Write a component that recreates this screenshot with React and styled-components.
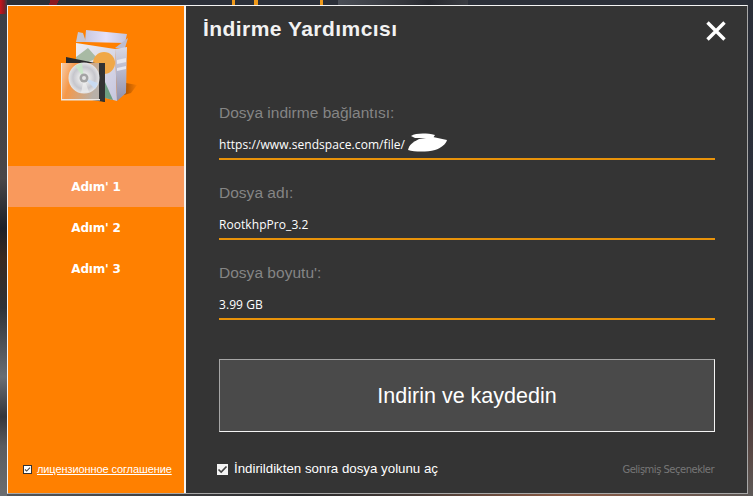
import React from "react";
import styled, { createGlobalStyle } from "styled-components";

const Global = createGlobalStyle`
  html, body { margin: 0; padding: 0; width: 753px; height: 496px; overflow: hidden; background: #2b2f38; }
  #root { width: 753px; height: 496px; }
  * { box-sizing: border-box; }
`;

const Desktop = styled.div`
  width: 753px;
  height: 496px;
  padding: 5px 5px 2px 7px;
  background:
    linear-gradient(90deg, #c8141c 0, #8a1a22 4px, transparent 7px) 0 0 / 7px 14px no-repeat,
    linear-gradient(115deg, transparent 0 30%, #8a1820 30% 38%, transparent 38%) 20px 0 / 100px 5px no-repeat,
    linear-gradient(90deg, transparent 0 4%, #f09a1a 4% 7%, transparent 7% 26%, #f09a1a 26% 30%, transparent 30% 92%, #f09a1a 92% 95%, transparent 95%) 228px 0 / 100px 5px no-repeat,
    linear-gradient(90deg, #4a4e56, #34363c 50%, #26282e 70%, #3a3c42 100%) 338px 0 / 130px 5px no-repeat,
    linear-gradient(180deg, #3a3e46 0, #4a4648 36%, #1c2028 46%, #3a2a20 52%, #2e3238 62%, #6a6e74 76%, #34363c 84%, #5a5c60 90%, #6b6d70 100%) 0 0 / 7px 100% no-repeat,
    linear-gradient(180deg, #2a2e38 0, #2e323c 70%, #4c3c3c 84%, #5a4a46 92%, #5e5a58 100%) right 0 / 5px 100% no-repeat,
    linear-gradient(90deg, #55575a 0, #3a3a3c 25%, #2a2a2c 40%, #453a36 55%, #8a5a44 75%, #74584c 88%, #5a5654 100%) 0 bottom / 100% 2px no-repeat,
    #2b2f38;
`;

const Win = styled.div`
  width: 741px;
  height: 489px;
  display: flex;
  border-top: 1px solid #f4f4f4;
  border-left: 1px solid #f4f4f4;
  border-right: 1px solid #a8a8a8;
  border-bottom: 1px solid #a8a8a8;
  background: #343434;
`;

const Side = styled.aside`
  width: 178px;
  flex: none;
  display: flex;
  flex-direction: column;
  background: #ff8000;
  border-right: 2px solid #f4f4f4;
`;

const Logo = styled.div`
  height: 160px;
  padding: 24px 0 0 53px;
`;

const Steps = styled.nav`
  display: flex;
  flex-direction: column;
`;

const Step = styled.div`
  height: 41px;
  display: flex;
  align-items: center;
  justify-content: center;
  font: bold 12px "DejaVu Sans", sans-serif;
  letter-spacing: -0.2px;
  color: #fff;
  background: ${(p) => (p.$active ? "#f9995c" : "transparent")};
`;

const License = styled.div`
  margin-top: auto;
  display: flex;
  align-items: center;
  gap: 5px;
  height: 16px;
  margin-bottom: 16px;
  padding-left: 15px;
`;

const LicenseBox = styled.span`
  width: 9px;
  height: 9px;
  flex: none;
  display: flex;
  background: #fff;
  border: 1px solid #333;
`;

const LicenseLink = styled.a`
  font: 11px "Liberation Sans", sans-serif;
  letter-spacing: -0.1px;
  color: #fff;
  text-decoration: underline;
  white-space: nowrap;
`;

const Main = styled.main`
  flex: 1;
  min-width: 0;
  display: flex;
  flex-direction: column;
  padding: 0 32px 0 33px;
`;

const Header = styled.header`
  height: 74px;
  margin: 0 -12px 0 -16px;
  padding-top: 11px;
  display: flex;
  align-items: flex-start;
  justify-content: space-between;
`;

const Title = styled.h1`
  margin: 0;
  font: bold 21px/24px "Liberation Sans", sans-serif;
  letter-spacing: 0.45px;
  color: #f2f2f2;
`;

const Close = styled.button`
  width: 22px;
  height: 22px;
  margin-top: 3px;
  padding: 0;
  border: 0;
  background: none;
  display: flex;
`;

const Fields = styled.div`
  display: flex;
  flex-direction: column;
`;

const Field = styled.div`
  height: 80px;
  position: relative;
  display: flex;
  flex-direction: column;
  border-bottom: 2px solid #e8930a;
`;

const Label = styled.label`
  height: 17px;
  margin-top: 24px;
  font: 15.5px/17px "Liberation Sans", sans-serif;
  letter-spacing: 0.02px;
  color: #858585;
`;

const Value = styled.div`
  margin-top: 16px;
  height: 16px;
  font: 12px/16px "Open Sans", sans-serif;
  letter-spacing: 0.06px;
  color: #fff;
`;

const Scribble = styled.svg`
  position: absolute;
  left: 188px;
  top: 53px;
`;

const Primary = styled.button`
  margin-top: 39px;
  height: 73px;
  width: 496px;
  flex: none;
  border-top: 1px solid #a6a6a6;
  border-left: 1px solid #a6a6a6;
  border-right: 1px solid #f4f4f4;
  border-bottom: 1px solid #f4f4f4;
  background: #4a4a4a;
  font: 21.5px "Liberation Sans", sans-serif;
  color: #fff;
  padding: 1px 0 0;
`;

const Footer = styled.footer`
  margin-top: 30px;
  height: 14px;
  display: flex;
  align-items: center;
  justify-content: space-between;
`;

const Check = styled.label`
  margin-left: -2px;
  display: flex;
  align-items: center;
  gap: 6px;
  font: 13.3px/14px "Liberation Sans", sans-serif;
  color: #fff;
`;

const CheckBox = styled.span`
  width: 11px;
  height: 11px;
  flex: none;
  display: flex;
  background: #f4f4f4;
`;

const Advanced = styled.a`
  margin-right: 1px;
  font: 10px "DejaVu Sans", sans-serif;
  letter-spacing: -0.5px;
  color: #777;
`;

const CDBox = () => (
  <svg width="76" height="72" viewBox="0 0 76 72" style={{ display: "block" }}>
    <defs>
      <linearGradient id="bx" x1="0" y1="0" x2="1" y2="1">
        <stop offset="0" stopColor="#eeeef2" />
        <stop offset="1" stopColor="#c6c6de" />
      </linearGradient>
      <linearGradient id="sd" x1="0" y1="0" x2="0" y2="1">
        <stop offset="0" stopColor="#d8d8e6" />
        <stop offset="1" stopColor="#9090aa" />
      </linearGradient>
      <linearGradient id="fl" x1="0" y1="0" x2="1" y2="0">
        <stop offset="0" stopColor="#c8c8e0" />
        <stop offset="0.5" stopColor="#e4e0f8" />
        <stop offset="1" stopColor="#c4c4dc" />
      </linearGradient>
      <linearGradient id="cs" x1="0" y1="0" x2="1" y2="0.3">
        <stop offset="0" stopColor="#f8d0b0" />
        <stop offset="0.35" stopColor="#f59848" />
        <stop offset="1" stopColor="#b8b0a8" />
      </linearGradient>
      <radialGradient id="cd" cx="0.5" cy="0.5" r="0.55">
        <stop offset="0" stopColor="#a8a8a8" />
        <stop offset="0.25" stopColor="#eaeaea" />
        <stop offset="0.65" stopColor="#c6c6cc" />
        <stop offset="1" stopColor="#f0f0f0" />
      </radialGradient>
      <linearGradient id="sh" x1="0" y1="0" x2="1" y2="0">
        <stop offset="0" stopColor="#a85000" />
        <stop offset="1" stopColor="#f87c00" />
      </linearGradient>
    </defs>
    <path d="M65 53l11 2-6 8-7 2z" fill="url(#sh)" />
    <path d="M15 12l2-10 5 1 3 9z" fill="#c6c6d4" />
    <path d="M25 0l41 4-2 9-40-1z" fill="url(#fl)" />
    <path d="M54 18l13-10-3 10z" fill="#bcbcd0" />
    <path d="M15 13l39 6 2 52-41-11z" fill="url(#bx)" />
    <path d="M54 19l12-2-1 46-9 8z" fill="url(#sd)" />
    <path d="M56 30l9-2v4l-9 2zM56 38l9-2v3l-9 2z" fill="#e6e6f0" />
    <path d="M15 27l12-9 9 10-21 10z" fill="#a8baa4" />
    <circle cx="43" cy="33" r="11" fill="#f0a848" />
    <path d="M44 52l8 18-8-2z" fill="#6e9e80" />
    <path d="M5 27l39 8v37l-39-6z" fill="#2a2a2a" />
    <path d="M0 33h39v37H0z" fill="url(#cs)" />
    <path d="M38 33h6v39l-6-2z" fill="#333" />
    <circle cx="23" cy="48" r="15.5" fill="url(#cd)" />
    <path d="M23 48l-9-12 7-3z" fill="#c6eac4" opacity=".8" />
    <path d="M23 48l14 5-3 6z" fill="#c8dcf4" opacity=".9" />
    <path d="M23 48l-3 15 8-1z" fill="#f0f0f0" opacity=".7" />
    <circle cx="23" cy="48" r="4.5" fill="#a4a4a4" />
    <circle cx="23" cy="48" r="2" fill="#e4e4e4" />
    <path d="M0 69h39v1.5H0zM0 33h1v37H0z" fill="#ece8e4" />
  </svg>
);

const Tick = ({ size, color }) => (
  <svg width={size} height={size} viewBox="0 0 11 11">
    <path d="M1.5 5.5L4.2 8 9.5 2.5" fill="none" stroke={color} strokeWidth="1.7" />
  </svg>
);

const CloseIcon = () => (
  <svg width="22" height="22" viewBox="0 0 22 22">
    <path d="M2.5 2.5L19.5 19.5M19.5 2.5L2.5 19.5" stroke="#fff" strokeWidth="3.4" fill="none" />
  </svg>
);

export default function App() {
  return (
    <>
      <Global />
      <Desktop>
        <Win>
          <Side>
            <Logo>
              <CDBox />
            </Logo>
            <Steps>
              <Step $active>Adım' 1</Step>
              <Step>Adım' 2</Step>
              <Step>Adım' 3</Step>
            </Steps>
            <License>
              <LicenseBox>
                <Tick size={7} color="#444" />
              </LicenseBox>
              <LicenseLink>лицензионное соглашение</LicenseLink>
            </License>
          </Side>
          <Main>
            <Header>
              <Title>İndirme Yardımcısı</Title>
              <Close aria-label="close">
                <CloseIcon />
              </Close>
            </Header>
            <Fields>
              <Field>
                <Label>Dosya indirme bağlantısı:</Label>
                <Value>https://www.sendspace.com/file/</Value>
                <Scribble width="41" height="20" viewBox="0 0 41 20">
                  <path d="M4 3C9 0 19 0 28 2L26 5 18 5 8 5z" fill="#fff" />
                  <path d="M1 17C2 12 6 9 12 6L26 4 40 7C39 11 34 15 28 17 20 19 8 19 1 17z" fill="#fff" />
                </Scribble>
              </Field>
              <Field>
                <Label>Dosya adı:</Label>
                <Value>RootkhpPro_3.2</Value>
              </Field>
              <Field>
                <Label>Dosya boyutu':</Label>
                <Value>3.99 GB</Value>
              </Field>
            </Fields>
            <Primary>Indirin ve kaydedin</Primary>
            <Footer>
              <Check>
                <CheckBox>
                  <Tick size={11} color="#444" />
                </CheckBox>
                İndirildikten sonra dosya yolunu aç
              </Check>
              <Advanced>Gelişmiş Seçenekler</Advanced>
            </Footer>
          </Main>
        </Win>
      </Desktop>
    </>
  );
}
